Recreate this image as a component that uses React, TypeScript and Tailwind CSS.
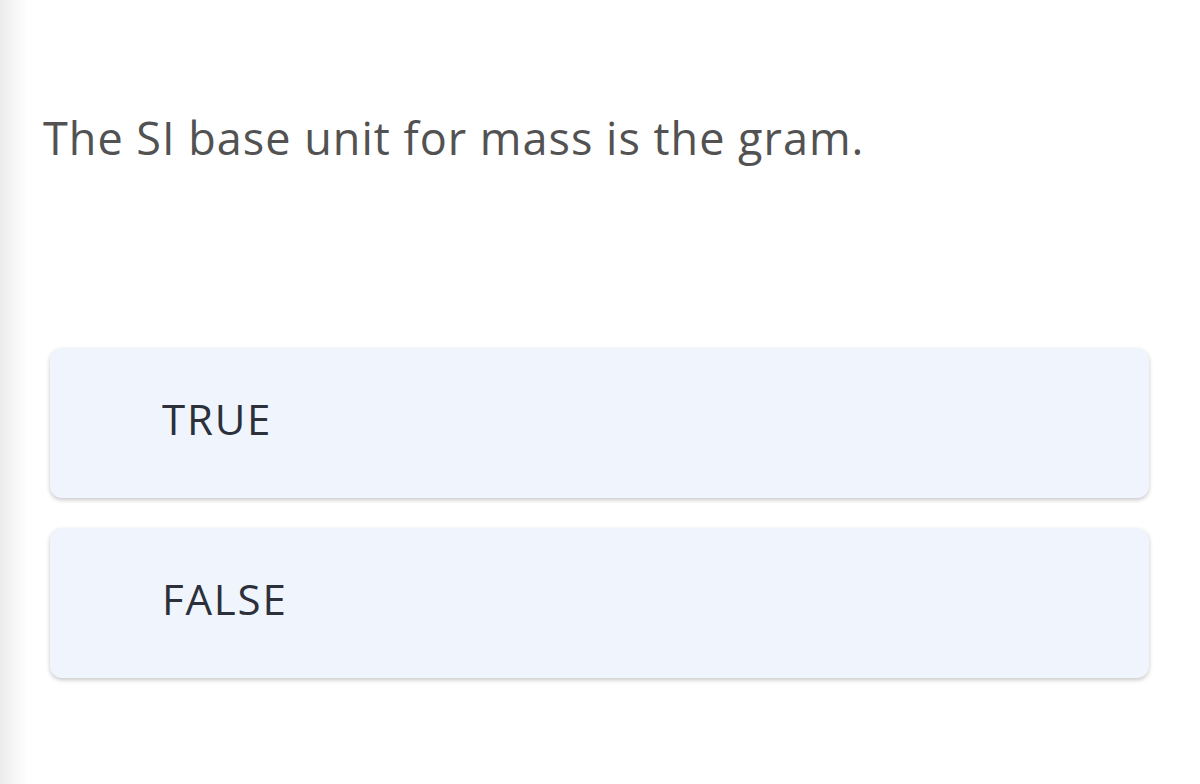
export default function App() {
  const options = ["TRUE", "FALSE"];

  return (
    <div className="relative w-[1200px] h-[784px] bg-white overflow-hidden font-['Open_Sans',sans-serif]">
      {/* soft edge on the left */}
      <div className="absolute left-0 top-0 h-full w-[28px] bg-gradient-to-r from-[#ececec] to-white" />

      <div className="relative flex flex-col pl-[50px] pr-[51px]">
        <h1 className="pt-[108px] -ml-[7px] text-[45px] tracking-[1px] leading-[60px] font-normal text-[#525252]">
          The SI base unit for mass is the gram.
        </h1>

        <div className="mt-[180px] flex flex-col gap-[30px]">
          {options.map((label) => (
            <button
              key={label}
              className="h-[150px] w-full rounded-[12px] bg-[#f0f4fd] shadow-[0_2px_4px_rgba(0,0,0,0.22)] flex items-center pl-[112px] pb-[9px] text-left"
            >
              <span className="text-[42px] tracking-[1.8px] text-[#2b303b] leading-none">{label}</span>
            </button>
          ))}
        </div>
      </div>
    </div>
  );
}
